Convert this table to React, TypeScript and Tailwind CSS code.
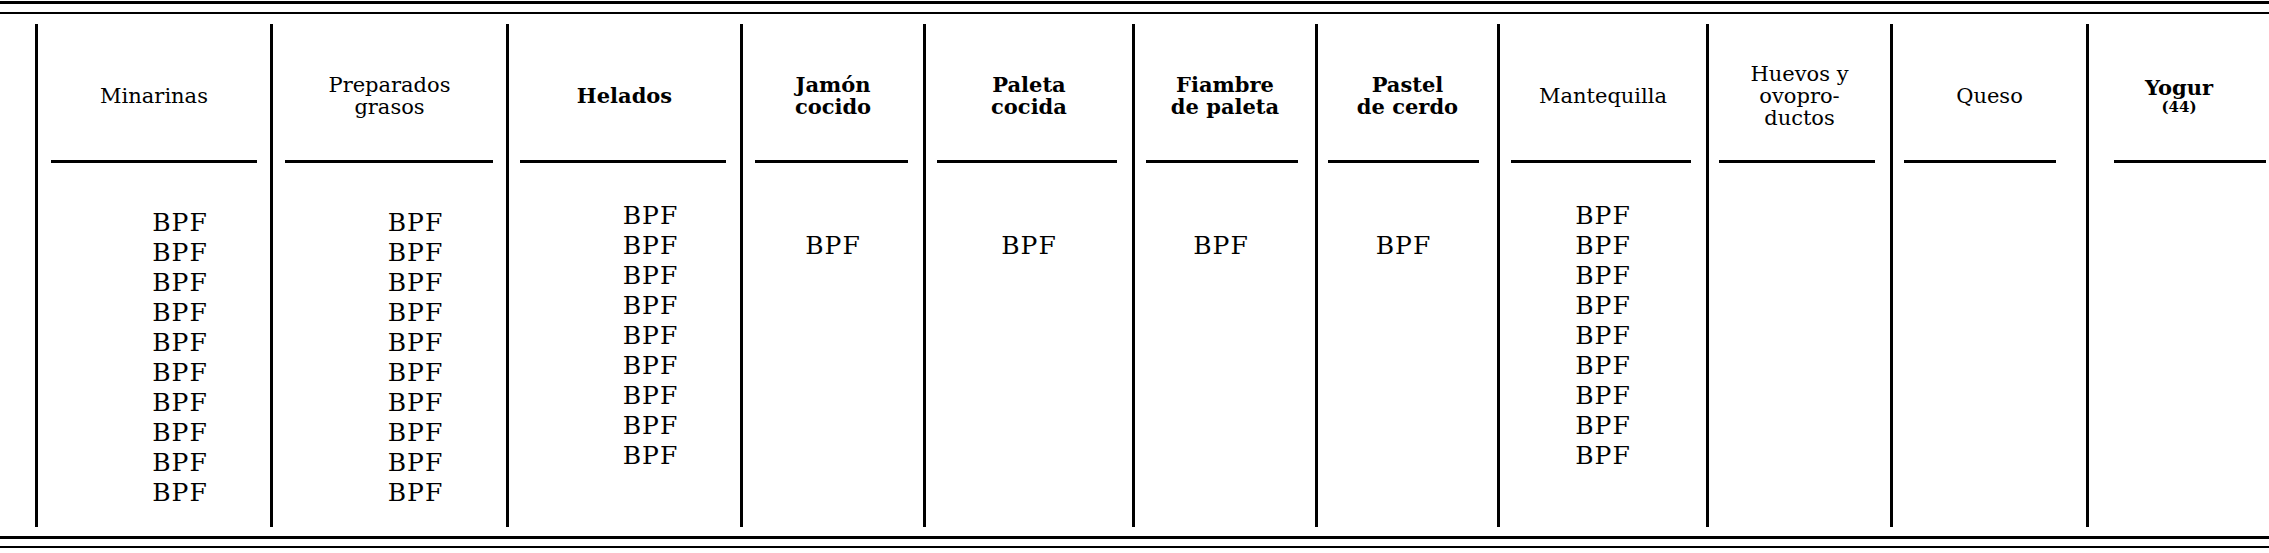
import React from "react"

type Column = {
  head: string[]
  headClass: string
  width: string
  rule: string
  rows: number
  body: string
}

const columns: Column[] = [
  { head: ["Minarinas"], headClass: "", width: "w-[235px]", rule: "ml-[13px] mr-[13px]", rows: 10, body: "pt-[45px] pl-[52px]" },
  { head: ["Preparados", "grasos"], headClass: "", width: "w-[236px]", rule: "ml-[12px] mr-[13px]", rows: 10, body: "pt-[45px] pl-[52px]" },
  { head: ["Helados"], headClass: "font-bold", width: "w-[234px]", rule: "ml-[11px] mr-[14px]", rows: 9, body: "pt-[38px] pl-[52px]" },
  { head: ["Jamón", "cocido"], headClass: "font-bold", width: "w-[183px]", rule: "ml-[12px] mr-[15px]", rows: 1, body: "pt-[68px]" },
  { head: ["Paleta", "cocida"], headClass: "font-bold", width: "w-[209px]", rule: "ml-[11px] mr-[15px]", rows: 1, body: "pt-[68px]" },
  { head: ["Fiambre", "de paleta"], headClass: "font-bold", width: "w-[183px]", rule: "ml-[11px] mr-[17px]", rows: 1, body: "pt-[68px] pr-[8px]" },
  { head: ["Pastel", "de cerdo"], headClass: "font-bold", width: "w-[182px]", rule: "ml-[10px] mr-[18px]", rows: 1, body: "pt-[68px] pr-[8px]" },
  { head: ["Mantequilla"], headClass: "", width: "w-[209px]", rule: "ml-[11px] mr-[15px]", rows: 9, body: "pt-[38px]" },
  { head: ["Huevos y", "ovopro-", "ductos"], headClass: "", width: "w-[184px]", rule: "ml-[10px] mr-[15px]", rows: 0, body: "" },
  { head: ["Queso"], headClass: "", width: "w-[196px]", rule: "ml-[11px] mr-[30px]", rows: 0, body: "" },
  { head: ["Yogur"], headClass: "font-bold", width: "w-[183px]", rule: "ml-[25px] mr-[3px]", rows: 0, body: "" },
]

export default function App() {
  return (
    <div
      className="flex h-[553px] w-[2269px] flex-col overflow-hidden bg-white text-black"
      style={{ fontFamily: '"DejaVu Serif", "Liberation Serif", serif' }}
    >
      {/* double rule on top */}
      <div className="mt-[1px] h-[3px] w-full bg-black" />
      <div className="mt-[8px] h-[2px] w-full bg-black" />

      <div className="mt-[10px] flex h-[503px]">
        <div className="w-[35px] shrink-0" />
        {columns.map((col, i) => (
          <div key={i} className={`${col.width} flex shrink-0 flex-col border-l-[3px] border-black`}>
            <div className="flex h-[136px] flex-col">
              <div className="flex flex-1 flex-col items-center justify-center pt-[8px] text-center text-[21px] leading-[22px]">
                {col.head.map((line) => (
                  <span key={line} className={col.headClass}>
                    {line}
                  </span>
                ))}
                {i === 10 && <span className="text-[15px] font-bold leading-[16px]">(44)</span>}
              </div>
            </div>
            <div className={`h-[3px] bg-black ${col.rule}`} />
            <div className={`flex flex-col items-center text-[25px] leading-[30px] tracking-[1px] ${col.body}`}>
              {Array.from({ length: col.rows }).map((_, r) => (
                <span key={r}>BPF</span>
              ))}
            </div>
          </div>
        ))}
      </div>

      {/* double rule at the foot */}
      <div className="mt-[9px] h-[3px] w-full bg-black" />
      <div className="mt-[7px] h-[2px] w-full bg-black" />
    </div>
  )
}
